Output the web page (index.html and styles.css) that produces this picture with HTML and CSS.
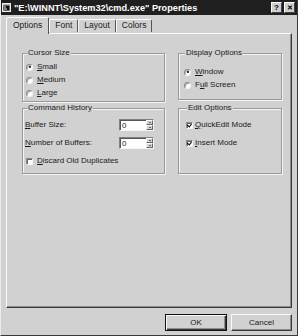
FILE: index.html
```html
<!DOCTYPE html>
<html>
<head lang="en">
    <meta charset="UTF-8">
    <title>cmd.exe Properties</title>
    <link rel="stylesheet" href="styles.css">
</head>
<body>
<div class="window">
    <div class="titlebar">
        <svg class="app-icon" width="9" height="9" viewBox="0 0 9 9">
            <rect x="0.5" y="0.5" width="8" height="8" fill="#bbb" stroke="#eee"/>
            <rect x="1.5" y="2.5" width="6" height="5" fill="#111"/>
            <path d="M2 4h2M2 6h3" stroke="#eee" stroke-width="1"/>
        </svg>
        <span class="title">"E:\WINNT\System32\cmd.exe" Properties</span>
        <span class="cap-btn">?</span>
        <span class="cap-btn close">&#x2715;</span>
    </div>

    <div class="content">
        <div class="tabs">
            <span class="tab active">Options</span>
            <span class="tab">Font</span>
            <span class="tab">Layout</span>
            <span class="tab">Colors</span>
        </div>

        <div class="panel">
            <div class="groups">
                <fieldset class="group cursor">
                    <legend>Cursor Size</legend>
                    <div class="row"><span class="radio checked"></span><u>S</u>mall</div>
                    <div class="row"><span class="radio"></span><u>M</u>edium</div>
                    <div class="row"><span class="radio"></span><u>L</u>arge</div>
                </fieldset>

                <fieldset class="group display">
                    <legend>Display Options</legend>
                    <div class="row"><span class="radio checked"></span><u>W</u>indow</div>
                    <div class="row"><span class="radio"></span>F<u>u</u>ll Screen</div>
                </fieldset>

                <fieldset class="group history">
                    <legend>Command History</legend>
                    <div class="row">
                        <span class="field-label"><u>B</u>uffer Size:</span>
                        <span class="spin"><span class="spin-value">0</span><span class="spin-btns"><i class="up"></i><i class="down"></i></span></span>
                    </div>
                    <div class="row">
                        <span class="field-label"><u>N</u>umber of Buffers:</span>
                        <span class="spin"><span class="spin-value">0</span><span class="spin-btns"><i class="up"></i><i class="down"></i></span></span>
                    </div>
                    <div class="row"><span class="check"></span><u>D</u>iscard Old Duplicates</div>
                </fieldset>

                <fieldset class="group edit">
                    <legend>Edit Options</legend>
                    <div class="row"><span class="check checked"></span><u>Q</u>uickEdit Mode</div>
                    <div class="row"><span class="check checked"></span><u>I</u>nsert Mode</div>
                </fieldset>
            </div>
        </div>

        <div class="buttons">
            <span class="btn default">OK</span>
            <span class="btn">Cancel</span>
        </div>
    </div>
</div>
</body>
</html>
```

FILE: styles.css
```css
body {
    margin: 0;
    font: 400 8px/10px "Liberation Sans", Arial, sans-serif;
    color: #1a1a1a;
    background: #d1d1d1;
}

.window {
    width: 298px;
    height: 336px;
    box-sizing: border-box;
    background: #d1d1d1;
    border-left: 1px solid #ececec;
    border-right: 1px solid #3a3a3a;
    border-bottom: 1px solid #3a3a3a;
    display: flex;
    flex-direction: column;
}

/* 标题栏 */
.titlebar {
    height: 15px;
    flex: none;
    display: flex;
    align-items: center;
    background: #1f1f1f;
    color: #fff;
    padding: 0 2px 0 1px;
}

.app-icon {
    flex: none;
    margin-right: 3px;
}

.title {
    flex: 1;
    font-weight: bold;
    font-size: 9.2px;
    white-space: nowrap;
}

.cap-btn {
    width: 9px;
    height: 9px;
    margin-left: 3px;
    background: #cfcfcf;
    border: 1px solid;
    border-color: #fff #404040 #404040 #fff;
    color: #000;
    font: bold 8px/9px "Liberation Sans", Arial, sans-serif;
    text-align: center;
}

.cap-btn.close {
    margin-left: 2px;
    font-size: 7px;
}

.content {
    flex: 1;
    display: flex;
    flex-direction: column;
    padding: 0 5px;
}

/* 选项卡 */
.tabs {
    display: flex;
    height: 16px;
    margin-top: 2px;
    padding-left: 2px;
}

.tab {
    box-sizing: border-box;
    height: 13px;
    margin-top: 2px;
    padding: 0 5px;
    border-top: 1px solid #fafafa;
    border-left: 1px solid #fafafa;
    border-right: 1px solid #555;
    border-radius: 2px 2px 0 0;
    line-height: 11px;
    font-size: 8.5px;
}

.tab.active {
    height: 17px;
    margin-top: 0;
    margin-left: -2px;
    padding: 1px 6px 0 6px;
    position: relative;
    z-index: 1;
    background: #d1d1d1;
    line-height: 12px;
}

.panel {
    height: 275px;
    box-sizing: border-box;
    border: 1px solid;
    border-color: #fafafa #3a3a3a #3a3a3a #fafafa;
    box-shadow: inset -1px -1px #8c8c8c;
    padding: 14px 0 0 15px;
}

.groups {
    display: grid;
    grid-template-columns: 143px 104px;
    grid-template-rows: 54px 71px;
    column-gap: 13px;
    row-gap: 1px;
}

.group {
    margin: 0;
    min-width: 0;
    padding: 0 2px;
    border: 1px solid #999;
    box-shadow: inset 1px 1px #f4f4f4, 1px 1px #f4f4f4;
    display: flex;
    flex-direction: column;
}

.group legend {
    margin-left: 2px;
    padding: 0 1px;
    line-height: 10px;
    background: #d1d1d1;
}

.row {
    height: 12px;
    display: flex;
    align-items: center;
    white-space: nowrap;
}

.cursor {
    padding-top: 3px;
    gap: 1px;
}

.display {
    height: 52px;
    box-sizing: border-box;
    align-self: start;
    padding-top: 8px;
    padding-left: 4px;
    gap: 1px;
}

.history {
    padding-top: 6px;
    gap: 6px;
}

.edit {
    padding-top: 6px;
    padding-left: 6px;
    gap: 6px;
}

.field-label {
    width: 94px;
}

/* 单选框、复选框 */
.radio, .check {
    flex: none;
    width: 7px;
    height: 7px;
    box-sizing: border-box;
    margin: 0 4px 0 1px;
    background: #fff;
    border: 1px solid;
    border-color: #8c8c8c #f4f4f4 #f4f4f4 #8c8c8c;
    box-shadow: inset 1px 1px #666;
    position: relative;
}

.radio {
    border-radius: 50%;
    box-shadow: inset 1px 1px #aaa;
}

.radio.checked:after {
    content: '';
    position: absolute;
    left: 1.5px;
    top: 1.5px;
    width: 2px;
    height: 2px;
    border-radius: 50%;
    background: #000;
}

.check.checked:after {
    content: '';
    position: absolute;
    left: 1px;
    top: 0;
    width: 2px;
    height: 3px;
    border-right: 1.5px solid #000;
    border-bottom: 1.5px solid #000;
    transform: rotate(40deg);
}

.edit .check {
    margin-left: 1px;
    margin-right: 2px;
}

/* 数字输入框 */
.spin {
    width: 35px;
    height: 12px;
    box-sizing: border-box;
    display: flex;
    background: #fff;
    border: 1px solid;
    border-color: #808080 #f4f4f4 #f4f4f4 #808080;
    box-shadow: inset 1px 1px #555;
}

.spin-value {
    flex: 1;
    padding: 1px 0 0 2px;
    line-height: 9px;
}

.spin-btns {
    width: 7px;
    display: flex;
    flex-direction: column;
}

.spin-btns i {
    flex: 1;
    background: #d1d1d1;
    border: 1px solid;
    border-color: #fafafa #666 #666 #fafafa;
    display: flex;
    align-items: center;
    justify-content: center;
}

.spin-btns i:after {
    content: '';
    border-left: 1.5px solid transparent;
    border-right: 1.5px solid transparent;
}

.spin-btns .up:after {
    border-bottom: 1.5px solid #000;
}

.spin-btns .down:after {
    border-top: 1.5px solid #000;
}

/* 底部按钮 */
.buttons {
    display: flex;
    justify-content: flex-end;
    gap: 4px;
    margin-top: 6px;
}

.btn {
    width: 61px;
    height: 17px;
    box-sizing: border-box;
    border: 1px solid;
    border-color: #fafafa #3a3a3a #3a3a3a #fafafa;
    box-shadow: inset -1px -1px #8c8c8c;
    text-align: center;
    line-height: 15px;
    font-size: 8px;
}

.btn.default {
    width: 62px;
    border: 1px solid #111;
    box-shadow: inset 1px 1px #fafafa, inset -1px -1px #3a3a3a, inset -2px -2px #8c8c8c;
}
```
